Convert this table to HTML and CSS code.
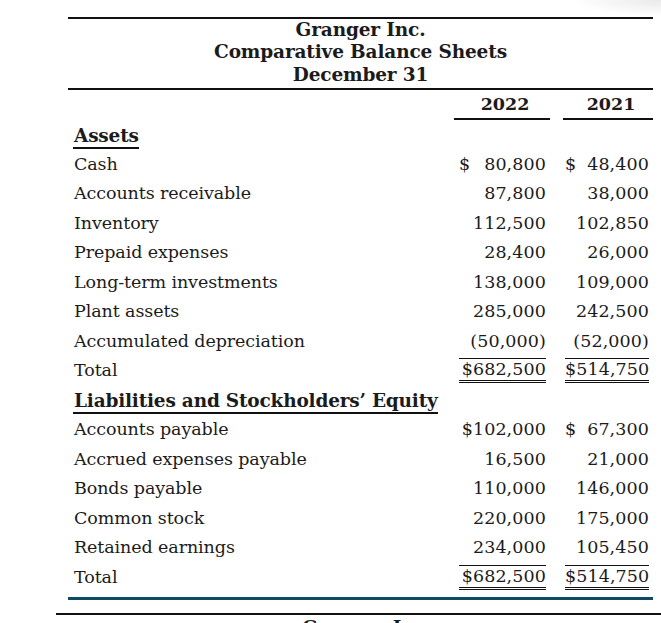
FILE: index.html
```html
<!DOCTYPE html>
<html>
<head>
<meta charset="utf-8">
<link rel="stylesheet" href="styles.css">
</head>
<body>
<div class="sheet">
  <div class="rule"></div>
  <div class="title">
    <div>Granger Inc.</div>
    <div>Comparative Balance Sheets</div>
    <div>December 31</div>
  </div>
  <div class="rule"></div>
  <div class="grid">
    <div class="cell"></div>
    <div class="year">2022</div>
    <div class="year">2021</div>

    <div class="cell label"><span class="section">Assets</span></div>
    <div class="cell"></div>
    <div class="cell"></div>

    <div class="cell label">Cash</div>
    <div class="cell val c1"><span class="amt dollar"><span>$</span><span>80,800</span></span></div>
    <div class="cell val c2"><span class="amt dollar"><span>$</span><span>48,400</span></span></div>

    <div class="cell label">Accounts receivable</div>
    <div class="cell val c1"><span class="amt">87,800</span></div>
    <div class="cell val c2"><span class="amt">38,000</span></div>

    <div class="cell label">Inventory</div>
    <div class="cell val c1"><span class="amt">112,500</span></div>
    <div class="cell val c2"><span class="amt">102,850</span></div>

    <div class="cell label">Prepaid expenses</div>
    <div class="cell val c1"><span class="amt">28,400</span></div>
    <div class="cell val c2"><span class="amt">26,000</span></div>

    <div class="cell label">Long-term investments</div>
    <div class="cell val c1"><span class="amt">138,000</span></div>
    <div class="cell val c2"><span class="amt">109,000</span></div>

    <div class="cell label">Plant assets</div>
    <div class="cell val c1"><span class="amt">285,000</span></div>
    <div class="cell val c2"><span class="amt">242,500</span></div>

    <div class="cell label">Accumulated depreciation</div>
    <div class="cell val c1"><span class="amt">(50,000)</span></div>
    <div class="cell val c2"><span class="amt">(52,000)</span></div>

    <div class="cell label">Total</div>
    <div class="cell val c1"><span class="amt total">$682,500</span></div>
    <div class="cell val c2"><span class="amt total">$514,750</span></div>

    <div class="cell label"><span class="section">Liabilities and Stockholders’ Equity</span></div>
    <div class="cell"></div>
    <div class="cell"></div>

    <div class="cell label">Accounts payable</div>
    <div class="cell val c1"><span class="amt">$102,000</span></div>
    <div class="cell val c2"><span class="amt dollar"><span>$</span><span>67,300</span></span></div>

    <div class="cell label">Accrued expenses payable</div>
    <div class="cell val c1"><span class="amt">16,500</span></div>
    <div class="cell val c2"><span class="amt">21,000</span></div>

    <div class="cell label">Bonds payable</div>
    <div class="cell val c1"><span class="amt">110,000</span></div>
    <div class="cell val c2"><span class="amt">146,000</span></div>

    <div class="cell label">Common stock</div>
    <div class="cell val c1"><span class="amt">220,000</span></div>
    <div class="cell val c2"><span class="amt">175,000</span></div>

    <div class="cell label">Retained earnings</div>
    <div class="cell val c1"><span class="amt">234,000</span></div>
    <div class="cell val c2"><span class="amt">105,450</span></div>

    <div class="cell label">Total</div>
    <div class="cell val c1"><span class="amt total">$682,500</span></div>
    <div class="cell val c2"><span class="amt total">$514,750</span></div>
  </div>
  <div class="teal"></div>
</div>
<div class="next">
  <div class="rule thin"></div>
  <div class="title next-title">
    <div>Granger Inc.</div>
  </div>
</div>
</body>
</html>
```

FILE: styles.css
```css
html {
  background: radial-gradient(90px 16px at 100% 0, #e9e9e9, #ffffff);
  background-color: #fff;
}
body {
  margin: 0;
  overflow: hidden;
  height: 623px;
  font-family: "DejaVu Serif", "Liberation Serif", serif;
  color: #1b1b1b;
  font-size: 17.5px;
}
.sheet {
  width: 585px;
  margin: 17px 0 0 68px;
}
.rule {
  height: 2px;
  background: #111;
}
.title {
  font-weight: bold;
  font-size: 18.5px;
  line-height: 22.3px;
  text-align: center;
  padding: 0 0 2px;
  letter-spacing: -0.15px;
}
.next-title {
  padding-top: 2px;
}
.grid {
  display: grid;
  grid-template-columns: 1fr 96px 90px;
  column-gap: 13px;
  grid-template-rows: 30px repeat(16, 29.5px);
}
.year {
  box-sizing: border-box;
  border-bottom: 2px solid #111;
  font-weight: bold;
  font-size: 17.5px;
  line-height: 28px;
  text-align: center;
  padding-left: 6px;
}
.cell {
  display: flex;
  align-items: center;
  line-height: 21px;
}
.label {
  padding-left: 6px;
  letter-spacing: -0.1px;
}
.section {
  font-weight: bold;
  font-size: 18.5px;
  border-bottom: 2px solid #111;
  padding-bottom: 1px;
  margin-top: 4px;
  margin-left: -1px;
  padding-left: 1px;
  letter-spacing: -0.2px;
}
.val {
  justify-content: flex-end;
  padding-right: 4px;
}
.amt {
  text-align: right;
  white-space: nowrap;
  letter-spacing: 0.1px;
}
.c1 .amt { width: 87px; }
.c2 .amt { width: 84px; }
.dollar {
  display: flex;
  justify-content: space-between;
}
.total {
  border-top: 1px solid #111;
  border-bottom: 3px double #111;
}
.teal {
  height: 3px;
  margin-top: 5px;
  background: #0f4a63;
}
.next {
  margin: 13px 0 0 56px;
  width: 622px;
}
.rule.thin {
  height: 2px;
}
```
